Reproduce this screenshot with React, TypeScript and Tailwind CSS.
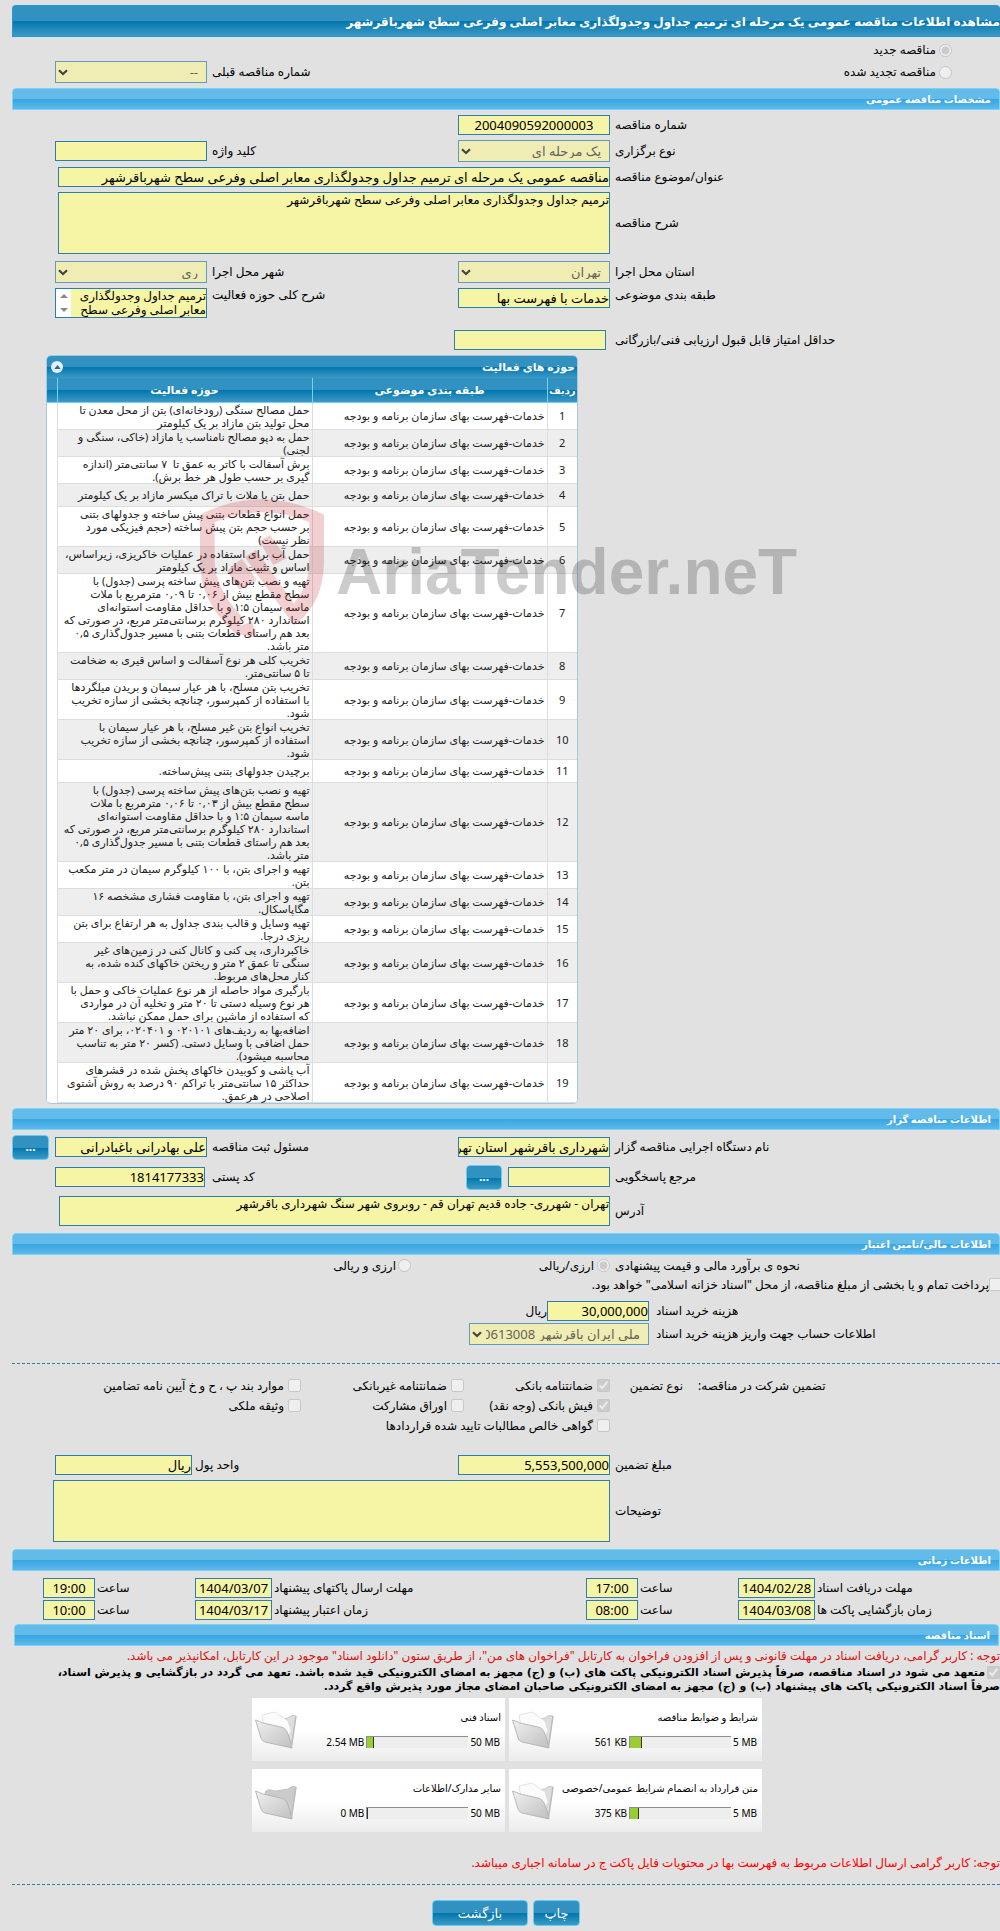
import React from "react";

const inputCls =
  "block h-5 w-full min-w-0 rounded-none border border-[#2b7fae] bg-[#f6f4a5] p-0 text-[13px] text-black outline-none";
const areaCls =
  "block w-full resize-none overflow-hidden rounded-none border border-[#2b7fae] bg-[#f6f4a5] p-0 text-[12px] leading-[14px] text-black outline-none";
const labelCls = "justify-self-end whitespace-nowrap pl-[5px]";
const rowCls = "grid grid-cols-[390fr_152fr_251fr_152fr_43fr] items-center";
const boxCls = "m-0 h-[13px] w-[13px] shrink-0";

function Select({ id, value }: { id: string; value: string }) {
  return (
    <div className="relative h-[22px] w-full">
      <select
        id={id}
        disabled
        className="block h-[22px] w-full appearance-none rounded-none border border-[#619bbd] bg-[#efedb4] py-0 pl-4 pr-2 text-[13px] text-[#63635a] opacity-100"
      >
        <option>{value}</option>
      </select>
      <svg viewBox="0 0 10 7" className="pointer-events-none absolute left-[3px] top-2 h-[7px] w-[10px]" aria-hidden="true">
        <path d="M1 1.2 L5 5 L9 1.2" fill="none" stroke="#45453f" strokeWidth="2.2" />
      </svg>
    </div>
  );
}

function SectionBar({ title, inset = false }: { title: string; inset?: boolean }) {
  return (
    <h2
      className={
        "flex h-[22px] items-center rounded-t-[4px] border border-[#7bd3f8] pr-2 text-[10px] font-bold text-white " +
        (inset ? "ml-0.5 mr-px" : "")
      }
      style={{ backgroundImage: "linear-gradient(#63bbea 0 50%, #38a5e0 50%, #5cb8ec 100%)" }}
    >
      {title}
    </h2>
  );
}

const blueGradient = { backgroundImage: "linear-gradient(#3191c0 0 50%, #0175ad 50%, #3d9ac5 100%)" };

function BlueButton({ children, className, label }: { children: React.ReactNode; className: string; label?: string }) {
  return (
    <button
      type="button"
      aria-label={label}
      className={"rounded-[4px] border border-[#62cdf5] text-white " + className}
      style={blueGradient}
    >
      {children}
    </button>
  );
}

const activities = [
  "حمل مصالح سنگی (رودخانه‌ای) بتن از محل معدن تا\nمحل تولید بتن مازاد بر یک کیلومتر",
  "حمل به دپو مصالح نامناسب یا مازاد (خاکی، سنگی و\nلجنی)",
  "برش آسفالت با کاتر به عمق تا  ۷ سانتی‌متر (اندازه\nگیری بر حسب طول هر خط برش).",
  "حمل بتن یا ملات با تراک میکسر مازاد بر یک کیلومتر",
  "حمل انواع قطعات بتنی پیش ساخته و جدولهای بتنی\nبر حسب حجم بتن پیش ساخته (حجم فیزیکی مورد\nنظر نیست)",
  "حمل آب برای استفاده در عملیات خاکریزی، زیراساس،\nاساس و تثبیت مازاد بر یک کیلومتر",
  "تهیه و نصب بتن‌های پیش ساخته پرسی (جدول) با\nسطح مقطع بیش از ۰,۰۶ تا ۰,۰۹ مترمربع با ملات\nماسه سیمان ۱:۵ و با حداقل مقاومت استوانه‌ای\nاستاندارد ۲۸۰ کیلوگرم برسانتی‌متر مربع، در صورتی که\nبعد هم راستای قطعات بتنی با مسیر جدول‌گذاری ۰,۵\nمتر باشد.",
  "تخریب کلی هر نوع آسفالت و اساس قیری به ضخامت\nتا ۵ سانتی‌متر.",
  "تخریب بتن مسلح، با هر عیار سیمان و بریدن میلگردها\nبا استفاده از کمپرسور، چنانچه بخشی از سازه تخریب\nشود.",
  "تخریب انواع بتن غیر مسلح، با هر عیار سیمان با\nاستفاده از کمپرسور، چنانچه بخشی از سازه تخریب\nشود.",
  "برچیدن جدولهای بتنی پیش‌ساخته.",
  "تهیه و نصب بتن‌های پیش ساخته پرسی (جدول) با\nسطح مقطع بیش از ۰,۰۳ تا ۰,۰۶ مترمربع با ملات\nماسه سیمان ۱:۵ و با حداقل مقاومت استوانه‌ای\nاستاندارد ۲۸۰ کیلوگرم برسانتی‌متر مربع، در صورتی که\nبعد هم راستای قطعات بتنی با مسیر جدول‌گذاری ۰,۵\nمتر باشد.",
  "تهیه و اجرای بتن، با ۱۰۰ کیلوگرم سیمان در متر مکعب\nبتن.",
  "تهیه و اجرای بتن، با مقاومت فشاری مشخصه ۱۶\nمگاپاسکال.",
  "تهیه وسایل و قالب بندی جداول به هر ارتفاع برای بتن\nریزی درجا.",
  "خاکبرداری، پی کنی و کانال کنی در زمین‌های غیر\nسنگی تا عمق ۲ متر و ریختن خاکهای کنده شده، به\nکنار محل‌های مربوط.",
  "بارگیری مواد حاصله از هر نوع عملیات خاکی و حمل با\nهر نوع وسیله دستی تا ۲۰ متر و تخلیه آن در مواردی\nکه استفاده از ماشین برای حمل ممکن نباشد.",
  "اضافه‌بها به ردیف‌های ۰۲۰۱۰۱ و ۰۲۰۴۰۱، برای ۲۰ متر\nحمل اضافی با وسایل دستی. (کسر ۲۰ متر به تناسب\nمحاسبه میشود).",
  "آب پاشی و کوبیدن خاکهای پخش شده در قشرهای\nحداکثر ۱۵ سانتی‌متر با تراکم ۹۰ درصد به روش آشتوی\nاصلاحی در هرعمق.",
];

function ActivityTable() {
  return (
    <div className="ml-[34px] mr-auto w-[532px] overflow-hidden rounded-[5px] border border-[#a3c9e2] bg-white">
      <div className="flex h-[22px] items-center justify-between pl-1 pr-[2px]" style={blueGradient}>
        <h3 className="text-[11px] font-bold text-white">حوزه های فعالیت</h3>
        <button type="button" aria-label="جمع کردن" className="flex h-3 w-3 items-center justify-center rounded-full bg-[#e3effb]">
          <svg viewBox="0 0 8 5" className="h-[4px] w-[7px]" aria-hidden="true">
            <path d="M0 5 L4 0 L8 5 Z" fill="#1c6c9c" />
          </svg>
        </button>
      </div>
      <table className="w-full table-fixed border-collapse">
        <colgroup>
          <col className="w-[30px]" />
          <col className="w-[235px]" />
          <col className="w-[255px]" />
          <col />
        </colgroup>
        <thead>
          <tr className="h-6 text-[11px] font-bold text-white" style={blueGradient}>
            <th className="border-b border-l border-[#73d1f5] p-0 text-[10px]">ردیف</th>
            <th className="border-b border-l border-[#73d1f5] p-0">طبقه بندی موضوعی</th>
            <th className="border-b border-l border-[#73d1f5] p-0">حوزه فعالیت</th>
            <td className="border-b border-[#73d1f5] p-0" />
          </tr>
        </thead>
        <tbody>
          {activities.map((text, i) => (
            <tr key={i} className="h-[23px] text-[11px] leading-[13px] text-[#222222] odd:bg-white even:bg-[#eeeeee]">
              <td className="border-b border-l border-[#dddddd] p-0 text-center">{i + 1}</td>
              <td className="whitespace-nowrap border-b border-l border-[#dddddd] p-0 pr-[2px]">خدمات-فهرست بهای سازمان برنامه و بودجه</td>
              <td className="whitespace-pre border-b border-l border-[#dddddd] p-0 pr-[2px]">{text}</td>
              <td className="bg-white p-0" />
            </tr>
          ))}
        </tbody>
      </table>
    </div>
  );
}

function Watermark() {
  return (
    <div dir="ltr" className="pointer-events-none absolute left-[200px] top-[499px] flex items-center" aria-hidden="true">
      <svg viewBox="30 28 372 414" className="h-[138px] w-[124px]">
        <g fill="#c01822" opacity="0.2">
          <path d="M30 75 Q118 30 215 28 Q312 30 402 75 V212 C402 298 372 364 312 407 L164 202 L198 180 L312 342 C344 302 358 262 358 212 V98 Q290 68 215 68 Q140 68 74 98 V212 C74 262 98 322 152 376 L154 408 L186 394 L200 442 L136 432 L120 416 C66 362 30 300 30 212 Z" />
          <path d="M130 226 L156 207 L200 272 L148 300 L112 244 Z" />
          <path d="M208 154 L240 136 L290 206 L250 226 Z" />
        </g>
      </svg>
      <span className="ml-3 mt-2 whitespace-nowrap font-['Liberation_Sans_Narrow','Liberation_Sans',sans-serif] text-[64px] font-bold leading-none text-black/20">
        AriaTender.neT
      </span>
    </div>
  );
}

function Folder({ empty }: { empty: boolean }) {
  return (
    <svg viewBox="0 0 42 38" className="h-[38px] w-[42px] shrink-0" aria-hidden="true">
      <defs>
        <linearGradient id="folderFront" x1="0" y1="0" x2="1" y2="1">
          <stop offset="0" stopColor="#f0f0f0" />
          <stop offset="1" stopColor="#c0c0c0" />
        </linearGradient>
      </defs>
      <path d="M10 11 L11 9 Q13 7 16 8 L20 9 L33 7 Q37 3 41 5 L36 36 L12 30 Z" fill={empty ? "#cbcbcb" : "#dedede"} stroke="#bdbdbd" strokeWidth="0.8" />
      {!empty && <path d="M7 4 L20 1 L33 10 L36 20 L32 28 L10 22 Z" fill="#fbfbfb" stroke="#d8d8d8" strokeWidth="0.7" />}
      <path d="M0.5 9 Q4 10 8 12 L26 16 Q31 17 33 23 Q35 28 37 37 L10 31 Q7 30 6 27 Z" fill="url(#folderFront)" stroke="#acacac" strokeWidth="0.8" />
      <path d="M41 5 L36.5 36" stroke="#bcbcbc" strokeWidth="1.4" />
    </svg>
  );
}

const documents = [
  { title: "شرایط و ضوابط مناقصه", max: "5 MB", used: "561 KB", pct: 12, empty: false },
  { title: "اسناد فنی", max: "50 MB", used: "2.54 MB", pct: 7, empty: false },
  { title: "متن قرارداد به انضمام شرایط عمومی/خصوصی", max: "5 MB", used: "375 KB", pct: 9, empty: false },
  { title: "سایر مدارک/اطلاعات", max: "50 MB", used: "0 MB", pct: 0, empty: true },
];

function Check({ id, label, checked = false }: { id: string; label: string; checked?: boolean }) {
  return (
    <div className="flex h-5 items-center gap-1">
      <input id={id} type="checkbox" disabled defaultChecked={checked} className={boxCls} />
      <label htmlFor={id} className="whitespace-nowrap">{label}</label>
    </div>
  );
}

function TimeField({ id, label, value }: { id: string; label: string; value: string }) {
  return (
    <>
      <label htmlFor={id} className="justify-self-end whitespace-nowrap pl-[2px]">{label}</label>
      <input id={id} readOnly defaultValue={value} className={inputCls + " text-center"} />
    </>
  );
}

export default function App() {
  return (
    <main
      dir="rtl"
      lang="fa"
      className="relative w-full overflow-hidden bg-[#e1e1e1] pb-[5px] pl-3 pt-[5px] font-['Noto_Sans','DejaVu_Sans',sans-serif] text-[12px] leading-[14px] text-black"
    >
      <h1
        className="flex h-8 items-center rounded-t-[4px] border border-r-0 border-[#2b95d8] pt-0.5 text-[12px] font-bold text-white"
        style={blueGradient}
      >
        مشاهده اطلاعات مناقصه عمومی یک مرحله ای ترمیم جداول وجدولگذاری معابر اصلی وفرعی سطح شهرباقرشهر
      </h1>

      <div className="pb-[5px] pt-0.5">
        <div className="flex h-[22px] items-center gap-[3px] pr-12">
          <input id="new" type="radio" name="kind" disabled defaultChecked className={boxCls} />
          <label htmlFor="new">مناقصه جدید</label>
        </div>
        <div className={rowCls}>
          <div className="col-span-2 flex items-center gap-[3px] pr-12">
            <input id="renewed" type="radio" name="kind" disabled className={boxCls} />
            <label htmlFor="renewed">مناقصه تجدید شده</label>
          </div>
          <label htmlFor="prev" className={labelCls}>شماره مناقصه قبلی</label>
          <Select id="prev" value="--" />
        </div>
      </div>

      <SectionBar title="مشخصات مناقصه عمومی" />
      <div className="flex flex-col gap-[5px] py-[5px]">
        <div className={rowCls}>
          <label htmlFor="no" className={labelCls}>شماره مناقصه</label>
          <input id="no" readOnly defaultValue="2004090592000003" className={inputCls + " text-center"} />
        </div>
        <div className={rowCls}>
          <label htmlFor="type" className={labelCls}>نوع برگزاری</label>
          <Select id="type" value="یک مرحله ای" />
          <label htmlFor="kw" className={labelCls}>کلید واژه</label>
          <input id="kw" readOnly className={inputCls} />
        </div>
        <div className={rowCls}>
          <label htmlFor="subject" className={labelCls}>عنوان/موضوع مناقصه</label>
          <div className="col-span-3 pl-[3px]">
            <input
              id="subject"
              readOnly
              defaultValue="مناقصه عمومی یک مرحله ای ترمیم جداول وجدولگذاری معابر اصلی وفرعی سطح شهرباقرشهر"
              className={inputCls}
            />
          </div>
        </div>
        <div className={rowCls}>
          <label htmlFor="desc" className={labelCls}>شرح مناقصه</label>
          <div className="col-span-3 pl-[3px]">
            <textarea
              id="desc"
              readOnly
              defaultValue="ترمیم جداول وجدولگذاری معابر اصلی وفرعی سطح شهرباقرشهر"
              className={areaCls + " h-[62px]"}
            />
          </div>
        </div>
        <div className={rowCls + " pt-0.5"}>
          <label htmlFor="province" className={labelCls}>استان محل اجرا</label>
          <Select id="province" value="تهران" />
          <label htmlFor="city" className={labelCls}>شهر محل اجرا</label>
          <Select id="city" value="ری" />
        </div>
        <div className="grid grid-cols-[390fr_152fr_251fr_152fr_43fr] items-start">
          <label htmlFor="class" className={labelCls}>طبقه بندی موضوعی</label>
          <input id="class" readOnly defaultValue="خدمات با فهرست بها" className={inputCls} />
          <label htmlFor="scope" className={labelCls}>شرح کلی حوزه فعالیت</label>
          <div className="relative">
            <textarea
              id="scope"
              readOnly
              defaultValue={"ترمیم جداول وجدولگذاری\nمعابر اصلی وفرعی سطح"}
              className={areaCls + " h-[30px] pl-4"}
            />
            <div className="absolute bottom-px left-px top-px flex w-[15px] flex-col items-center justify-between bg-white py-[5px]">
              <svg viewBox="0 0 8 4" className="h-1 w-2" aria-hidden="true"><path d="M0 4 L4 0 L8 4 Z" fill="#8a8a8a" /></svg>
              <svg viewBox="0 0 8 4" className="h-1 w-2" aria-hidden="true"><path d="M0 0 L4 4 L8 0 Z" fill="#8a8a8a" /></svg>
            </div>
          </div>
        </div>
        <div className={rowCls + " pt-[7px]"}>
          <label htmlFor="score" className={labelCls}>حداقل امتیاز قابل قبول ارزیابی فنی/بازرگانی</label>
          <div className="-ml-1 pr-1">
            <input id="score" readOnly className={inputCls} />
          </div>
        </div>
      </div>

      <ActivityTable />

      <div className="pt-1">
        <SectionBar title="اطلاعات مناقصه گزار" />
      </div>
      <div className="pb-[7px] pt-[5px]">
        <div className={rowCls}>
          <label htmlFor="agency" className={labelCls}>نام دستگاه اجرایی مناقصه گزار</label>
          <input id="agency" readOnly defaultValue="شهرداری باقرشهر استان تهران" className={inputCls} />
          <label htmlFor="officer" className={labelCls}>مسئول ثبت مناقصه</label>
          <input id="officer" readOnly defaultValue="علی بهادرانی باغبادرانی" className={inputCls} />
          <BlueButton className="h-[25px] w-[37px] justify-self-end text-[12px] font-bold" label="انتخاب مسئول">...</BlueButton>
        </div>
        <div className={rowCls + " pt-[5px]"}>
          <label htmlFor="ref" className={labelCls}>مرجع پاسخگویی</label>
          <div className="flex items-center gap-1.5">
            <div className="w-[102px]">
              <input id="ref" readOnly className={inputCls} />
            </div>
            <BlueButton className="h-[25px] w-9 text-[12px] font-bold" label="انتخاب مرجع">...</BlueButton>
          </div>
          <label htmlFor="zip" className={labelCls}>کد پستی</label>
          <div className="pr-0.5">
            <input id="zip" readOnly defaultValue="1814177333" className={inputCls + " text-right"} />
          </div>
        </div>
        <div className={rowCls + " pt-1.5"}>
          <label htmlFor="addr" className={labelCls}>آدرس</label>
          <div className="col-span-3 pl-1">
            <textarea
              id="addr"
              readOnly
              defaultValue="تهران - شهرری- جاده قدیم تهران قم - روبروی شهر سنگ شهرداری باقرشهر"
              className={areaCls + " h-[30px]"}
            />
          </div>
        </div>
      </div>

      <SectionBar title="اطلاعات مالی/تامین اعتبار" />
      <div className="pt-px">
        <div className="grid h-5 grid-cols-[390fr_199fr_399fr] items-center">
          <span className={labelCls}>نحوه ی برآورد مالی و قیمت پیشنهادی</span>
          <div className="flex items-center gap-[3px]">
            <input id="fx" type="radio" name="cur" disabled defaultChecked className={boxCls} />
            <label htmlFor="fx">ارزی/ریالی</label>
          </div>
          <div className="flex items-center gap-[2px]">
            <input id="fxr" type="radio" name="cur" disabled className={boxCls} />
            <label htmlFor="fxr">ارزی و ریالی</label>
          </div>
        </div>
        <div className="-mr-0.5">
          <div className="flex h-[18px] items-center">
            <input id="bonds" type="checkbox" disabled className={boxCls} />
            <label htmlFor="bonds">پرداخت تمام و یا بخشی از مبلغ مناقصه، از محل "اسناد خزانه اسلامی" خواهد بود.</label>
          </div>
        </div>
        <div className="grid grid-cols-[351fr_180fr_457fr] items-center gap-y-0.5 pt-[7px]">
          <label htmlFor="fee" className="justify-self-end pl-[7px]">هزینه خرید اسناد</label>
          <div className="flex items-center">
            <div className="w-[102px]">
              <input id="fee" readOnly defaultValue="30,000,000" className={inputCls + " text-right"} />
            </div>
            <span>ریال</span>
          </div>
          <span />
          <label htmlFor="acct" className="justify-self-end pl-[7px]">اطلاعات حساب جهت واریز هزینه خرید اسناد</label>
          <Select id="acct" value="ملی ایران باقرشهر 0613008" />
        </div>
      </div>

      <div className="mt-[18px] border-t border-dashed border-[#2b7fae]" />

      <div className="grid grid-cols-[302fr_88fr_145fr_164fr_289fr] pt-3">
        <span className="justify-self-end pt-[3px]">تضمین شرکت در مناقصه:</span>
        <span className="pr-[15px] pt-[3px]">نوع تضمین</span>
        <div className="col-span-3 grid grid-cols-[146fr_163fr_289fr]">
          <Check id="g1" label="ضمانتنامه بانکی" checked />
          <Check id="g2" label="ضمانتنامه غیربانکی" />
          <Check id="g3" label="موارد بند پ ، ح و خ آیین نامه تضامین" />
          <Check id="g4" label="فیش بانکی (وجه نقد)" checked />
          <Check id="g5" label="اوراق مشارکت" />
          <Check id="g6" label="وثیقه ملکی" />
          <div className="col-span-3">
            <Check id="g7" label="گواهی خالص مطالبات تایید شده قراردادها" />
          </div>
        </div>
      </div>

      <div className="flex flex-col gap-[5px] pb-[7px] pt-[19px]">
        <div className={rowCls}>
          <label htmlFor="amount" className={labelCls}>مبلغ تضمین</label>
          <input id="amount" readOnly defaultValue="5,553,500,000" className={inputCls + " text-right"} />
          <label htmlFor="unit" className="-ml-3 justify-self-end whitespace-nowrap">واحد پول</label>
          <div className="pr-[15px]">
            <input id="unit" readOnly defaultValue="ریال" className={inputCls} />
          </div>
        </div>
        <div className={rowCls}>
          <label htmlFor="notes" className={labelCls}>توضیحات</label>
          <div className="col-span-3 -ml-0.5">
            <textarea id="notes" readOnly className={areaCls + " h-[62px]"} />
          </div>
        </div>
      </div>

      <SectionBar title="اطلاعات زمانی" />
      <div className="grid grid-cols-[185fr_77fr_100fr_52fr_314fr_77fr_100fr_52fr_31fr] items-center gap-y-0.5 pb-1 pt-[7px]">
        <TimeField id="t1" label="مهلت دریافت اسناد" value="1404/02/28" />
        <TimeField id="t2" label="ساعت" value="17:00" />
        <TimeField id="t3" label="مهلت ارسال پاکتهای پیشنهاد" value="1404/03/07" />
        <TimeField id="t4" label="ساعت" value="19:00" />
        <span />
        <TimeField id="t5" label="زمان بازگشایی پاکت ها" value="1404/03/08" />
        <TimeField id="t6" label="ساعت" value="08:00" />
        <TimeField id="t7" label="زمان اعتبار پیشنهاد" value="1404/03/17" />
        <TimeField id="t8" label="ساعت" value="10:00" />
      </div>

      <SectionBar title="اسناد مناقصه" inset />
      <p className="pt-[3px] text-[#d91212]">
        توجه : کاربر گرامی، دریافت اسناد در مهلت قانونی و پس از افزودن فراخوان به کارتابل "فراخوان های من"، از طریق ستون "دانلود اسناد" موجود در این کارتابل، امکانپذیر می باشد.
      </p>
      <p className="pt-[3px] font-['DejaVu_Sans',sans-serif] text-[11px] font-bold">
        <input id="commit" type="checkbox" disabled defaultChecked className="m-0 ml-0.5 h-[13px] w-[13px] align-middle" />
        <label htmlFor="commit">
          متعهد می شود در اسناد مناقصه، صرفاً پذیرش اسناد الکترونیکی پاکت های (ب) و (ج) مجهز به امضای الکترونیکی قید شده باشد. تعهد می گردد در بازگشایی و پذیرش اسناد،
          <br />
          صرفاً اسناد الکترونیکی پاکت های پیشنهاد (ب) و (ج) مجهز به امضای الکترونیکی صاحبان امضای مجاز مورد پذیرش واقع گردد.
        </label>
      </p>

      <div className="mr-[238px] mt-1 grid w-[510px] grid-cols-2 gap-x-1 gap-y-2">
        {documents.map((d) => (
          <section key={d.title} className="relative flex h-[63px] items-center bg-linear-to-b from-white from-50% to-[#ececec] pl-[3px] pr-1">
            <div className="flex flex-1 flex-col gap-[11px]">
              <h4 className="whitespace-nowrap text-[10px]">{d.title}</h4>
              <div className="flex items-center text-[10px]">
                <span className="whitespace-nowrap pl-[2px] pr-[1px]" dir="ltr">{d.max}</span>
                <div dir="ltr" className="h-[12px] w-[102px] border-l border-t border-[#8f8f8f] bg-[#eeeeee]">
                  <div className="h-full border-r border-[#333333] bg-[#9acd32]" style={{ width: d.pct + "%" }} />
                </div>
                <span className="whitespace-nowrap pr-[2px]" dir="ltr">{d.used}</span>
              </div>
            </div>
            <div className="absolute left-[3px] top-[13px]">
              <Folder empty={d.empty} />
            </div>
          </section>
        ))}
      </div>

      <p className="mt-6 text-[#ff0000]">
        توجه: کاربر گرامی ارسال اطلاعات مربوط به فهرست بها در محتویات فایل پاکت ج در سامانه اجباری میباشد.
      </p>

      <div className="mt-[14px] border-t border-dashed border-[#2b7fae]" />

      <div className="flex justify-center gap-[5px] pt-[15px]">
        <BlueButton className="h-[26px] w-[47px] text-[13px]">چاپ</BlueButton>
        <BlueButton className="h-[26px] w-24 text-[13px]">بازگشت</BlueButton>
      </div>

      <Watermark />
    </main>
  );
}
